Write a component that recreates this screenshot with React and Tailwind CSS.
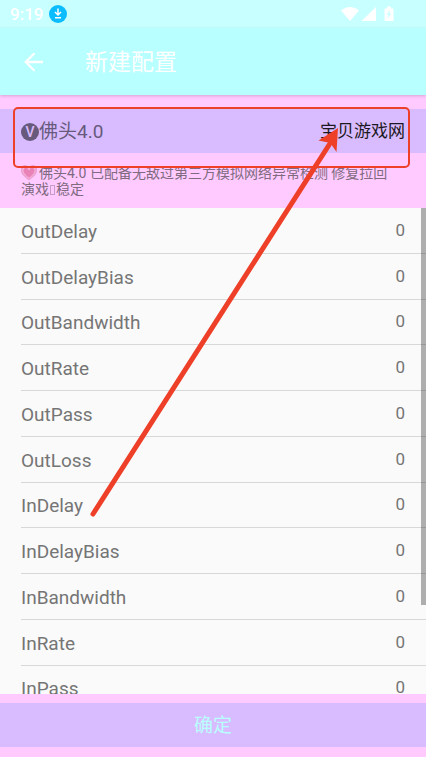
import React, { useState } from 'react';

const FIELDS = [
  'OutDelay',
  'OutDelayBias',
  'OutBandwidth',
  'OutRate',
  'OutPass',
  'OutLoss',
  'InDelay',
  'InDelayBias',
  'InBandwidth',
  'InRate',
  'InPass',
];

function StatusBar() {
  return (
    <div className="flex h-7 shrink-0 items-center bg-[#c8ffff] pl-[10px] pr-8 text-white">
      <span className="text-[17px] leading-7 font-medium">9:19</span>
      <svg className="ml-1.5 h-[18px] w-[18px]" viewBox="0 0 18 18" fill="none">
        <circle cx="9" cy="9" r="9" fill="#0bbcff" />
        <path d="M9 3.500v6M6 7l3 3 3-3M6 12.700h6" stroke="currentColor" strokeWidth="1.500" />
      </svg>
      <svg className="ml-auto h-4 w-[54px]" viewBox="0 0 54 16" fill="currentColor">
        <path d="M1 4.500Q5 1 10 1T19 4.500L10 15Z" />
        <path d="M36 1v14H21.500Z" />
        <path d="M44.500 2.500h2.500V0.500h4v2H53.500V15h-9Z" />
        <path d="M50 4l-3.500 4.500h2l-.6 4 3.300-5h-2Z" fill="#c8ffff" />
      </svg>
    </div>
  );
}

function Toolbar() {
  return (
    <header className="relative z-10 flex h-[67px] shrink-0 items-center bg-[#b8ffff] pl-6 text-white shadow-[0_1px_3px_rgba(0,0,0,0.18)]">
      <button type="button" aria-label="返回" className="h-5 w-5">
        <svg className="h-5 w-5" viewBox="0 0 20 20" fill="none" stroke="currentColor" strokeWidth="2.300">
          <path d="M19 10H2M10.500 1.200L1.700 10l8.800 8.800" />
        </svg>
      </button>
      <h1 className="ml-[41px] pt-0.5 text-[23px] leading-8 font-normal">新建配置</h1>
    </header>
  );
}

function FieldRow({ name }) {
  const [value, setValue] = useState('0');

  return (
    <li className="ml-[21px] flex h-[46px] shrink-0 items-center border-b border-[#d8d8d8] pr-[21px] nth-[4n+3]:h-[45px]">
      <label htmlFor={name} className="flex-1 pt-0.5 text-[19px] leading-6">{name}</label>
      <input
        id={name}
        value={value}
        onChange={(e) => setValue(e.target.value)}
        className="w-20 bg-transparent pb-0.5 text-right text-[17px] leading-6 outline-none"
      />
    </li>
  );
}

// red callout box and the arrow that points at the site name
function Annotation() {
  return (
    <svg
      className="pointer-events-none absolute left-0 top-0 z-20 h-[757px] w-[426px]"
      viewBox="0 0 426 757"
      fill="none"
    >
      <rect x="14" y="108" width="395" height="59" rx="4" stroke="#ee3f28" strokeWidth="2" />
      <path d="M93 514L329 145" stroke="#ee3f28" strokeWidth="5" strokeLinecap="round" />
      <path d="M338 128L318.500 140.500L328 142.500L332 145.500L336.500 152Z" fill="#ee3f28" />
    </svg>
  );
}

export default function App() {
  return (
    <div className="relative flex h-screen flex-col overflow-hidden bg-[#ffcaff] font-['Roboto','Noto_Sans_CJK_SC',sans-serif] text-[#757575]">
      <StatusBar />
      <Toolbar />

      <section className="shrink-0 pt-[14px]">
        <div className="flex h-11 items-center justify-between bg-[#d9bcff] px-[21px]">
          <h2 className="flex items-center pt-0.5 text-[19px] leading-6 font-normal text-[#675a7c]">
            <span className="flex h-[18px] w-[18px] items-center justify-center rounded-full bg-[#675a7c] text-sm leading-4 font-medium text-[#d9bcff]">
              V
            </span>
            佛头4.0
          </h2>
          <span className="text-[17px] leading-6 text-[#1c1822]">宝贝游戏网</span>
        </div>
        <p className="mt-3 mb-[11px] pl-[21px] pr-8 text-sm leading-4 text-[#806b80]">
          <svg className="mr-0.5 inline h-4 w-4 align-text-bottom" viewBox="0 0 16 16">
            <path d="M8 15.500C3 11.500 0 9 0 5.500A4 4 0 0 1 8 3a4 4 0 0 1 8 2.500c0 3.500-3 6-8 10Z" fill="#ed9fcf" />
            <path d="M8 13.300C4 10 2 8 2 5.500A2.500 2.500 0 0 1 8 5a2.500 2.500 0 0 1 6 .5c0 2.500-2 4.500-6 7.800Z" fill="#e983b7" stroke="#f8b8e2" />
          </svg>
          佛头4.0 已配备无敌过第三方模拟网络异常检测 修复拉回演戏
          <span className="mx-px inline-block h-2.5 w-[5px] border border-[#c69dc6] align-middle" />
          稳定
        </p>
      </section>

      <main className="relative min-h-0 flex-1 overflow-hidden bg-[#fafafa]">
        <ul className="flex flex-col">
          {FIELDS.map((name) => (
            <FieldRow key={name} name={name} />
          ))}
        </ul>
        <div className="absolute right-0 top-0 h-[397px] w-[5px] bg-black/30" />
      </main>

      <footer className="shrink-0 pt-[9px] pb-[10px]">
        <button type="button" className="h-11 w-full bg-[#d9bcff] pt-0.5 text-[19px] leading-6 text-[#b8ffff]">
          确定
        </button>
      </footer>

      <Annotation />
    </div>
  );
}
